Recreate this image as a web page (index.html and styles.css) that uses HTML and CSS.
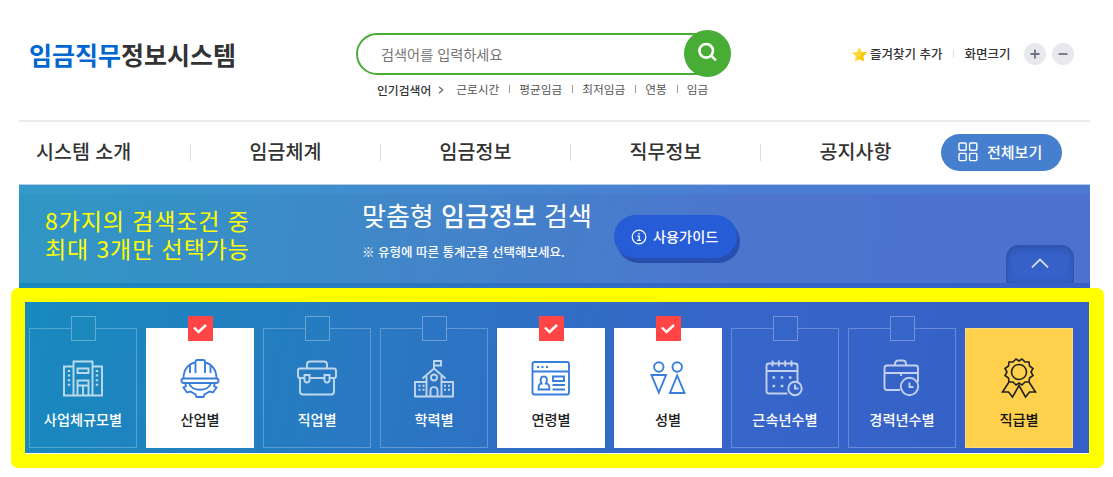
FILE: index.html
```html
<!DOCTYPE html>
<html lang="ko">

<head>
    <meta charset="UTF-8" />
    <meta name="viewport" content="width=device-width, initial-scale=1.0" />
    <title>임금직무정보시스템</title>
    <link rel="stylesheet" href="styles.css">
</head>

<body>
    <div class="wrap">
        <header class="header">
            <h1 class="logo"><span>임금직무</span>정보시스템</h1>

            <div class="search">
                <div class="search-box">
                    <input type="text" placeholder="검색어를 입력하세요">
                    <button class="search-btn" aria-label="검색">
                        <svg width="22" height="22" viewBox="0 0 22 22" fill="none" stroke="#fff" stroke-width="2.6">
                            <circle cx="9.2" cy="9.8" r="6.8" />
                            <path d="M14 14.6L19 19.4" />
                        </svg>
                    </button>
                </div>
                <div class="keywords">
                    <strong>인기검색어</strong>
                    <svg width="6" height="8" viewBox="0 0 6 8" fill="none" stroke="#777" stroke-width="1.5">
                        <path d="M1 .7L4.6 4L1 7.3" />
                    </svg>
                    <ul>
                        <li>근로시간</li>
                        <li>평균임금</li>
                        <li>최저임금</li>
                        <li>연봉</li>
                        <li>임금</li>
                    </ul>
                </div>
            </div>

            <div class="util">
                <svg width="15" height="15" viewBox="0 0 15 15">
                    <path fill="#ffd83a" d="M7.5 0L9.8 4.9L15 5.6L11.2 9.3L12.1 14.6L7.5 12.1L2.9 14.6L3.8 9.3L0 5.6L5.2 4.9Z" />
                    <path fill="#ffc400" d="M9.8 4.9L15 5.6L11.2 9.3L12.1 14.6L7.5 12.1L4.5 13.6L9 8Z" />
                </svg>
                <span class="fav">즐겨찾기 추가</span>
                <span class="size">화면크기</span>
                <button class="zoom" aria-label="확대">
                    <svg width="10" height="10" viewBox="0 0 10 10" stroke="#6c7382" stroke-width="1.8"><path d="M.5 5H9.5M5 .5V9.5" /></svg>
                </button>
                <button class="zoom" aria-label="축소">
                    <svg width="10" height="10" viewBox="0 0 10 10" stroke="#6c7382" stroke-width="1.8"><path d="M.5 5H9.5" /></svg>
                </button>
            </div>
        </header>

        <nav class="nav">
            <ul>
                <li>시스템 소개</li>
                <li>임금체계</li>
                <li>임금정보</li>
                <li>직무정보</li>
                <li>공지사항</li>
            </ul>
            <button class="all">
                <svg width="20" height="20" viewBox="0 0 20 20" fill="none" stroke="#fff" stroke-width="1.4">
                    <rect x="1" y="1" width="7.2" height="7.2" rx="1" />
                    <rect x="11.6" y="1" width="7.2" height="7.2" rx="1" />
                    <rect x="1" y="11.4" width="7.2" height="7.2" rx="1" />
                    <rect x="11.6" y="11.4" width="7.2" height="7.2" rx="1" />
                </svg>
                <span>전체보기</span>
            </button>
        </nav>

        <section class="finder">
            <div class="finder-head">
                <p class="notice">8가지의 검색조건 중<br>최대 3개만 선택가능</p>
                <div class="title">
                    <h2>맞춤형 <b>임금정보</b> 검색</h2>
                    <p>※ 유형에 따른 통계군을 선택해보세요.</p>
                </div>
                <button class="guide">
                    <svg width="16" height="16" viewBox="0 0 16 16" fill="none" stroke="#fff" stroke-width="1.2">
                        <circle cx="8" cy="8" r="6.8" />
                        <path d="M8 4V5.6M6.4 7.2H8.2V11.2M6.2 11.4H10" stroke-width="1.3" />
                    </svg>
                    <span>사용가이드</span>
                </button>
                <button class="fold" aria-label="접기">
                    <svg width="18" height="11" viewBox="0 0 18 11" fill="none" stroke="#d5def5" stroke-width="1.8">
                        <path d="M1 9.3L9 1.5L17 9.3" />
                    </svg>
                </button>
            </div>

            <ul class="cards">
                <li class="card">
                    <i class="check"></i>
                    <svg class="icon" viewBox="0 0 44 44">
                        <path d="M12.5 10.5H3V39.5H41V10.5H31.5M12.5 39.5V5.5H31.5V39.5" />
                        <path d="M16.5 12.5H27.5V17H16.5ZM16.5 39.5V24.5H27.5V39.5M16.5 29.5H27.5M22 29.5V39.5" />
                        <path d="M8 14V30M36 14V30" stroke-width="2.4" stroke-dasharray="2 2.6" />
                    </svg>
                    <span>사업체규모별</span>
                </li>
                <li class="card on">
                    <i class="check"><svg width="16" height="12" viewBox="0 0 16 12"><path d="M2 4.5L6.5 9L14 2" /></svg></i>
                    <svg class="icon" viewBox="0 0 44 44">
                        <path d="M5.5 22.5C5.5 14 10 8 17 6.5M27 6.5C34 8 38.5 14 38.5 22.5M17.5 17V5.5Q17.5 4 19.500 4H25Q27 4 27 5.500V17M12 17V9.500M32.500 17V9.500" />
                        <rect x="3.500" y="22.500" width="37" height="4.500" rx="2.200" />
                        <path d="M11 27C13 36 31 36 33 27M7 27L8 30L5.500 31.500L9 36.500L12.500 35.500L17.500 38.500L18.500 41H25.500L26.500 38.500L31.500 35.500L35 36.500L38.500 31.500L36 30L37 27" />
                    </svg>
                    <span>산업별</span>
                </li>
                <li class="card">
                    <i class="check"></i>
                    <svg class="icon" viewBox="0 0 44 44">
                        <path d="M12 12V8.500Q12 5.500 15 5.500H29Q32 5.500 32 8.500V12M9 22H5Q3 22 3 20V14.500Q3 12.500 5 12.500H39Q41 12.500 41 14.500V20Q41 22 39 22H35M14.500 22H29.500M5 22V35.500Q5 38.500 8 38.500H36Q39 38.500 39 35.500V22" />
                        <path d="M9.500 19H14.500V24Q14.500 26.500 12 26.500T9.500 24ZM29.500 19H34.500V24Q34.500 26.500 32 26.500T29.500 24Z" />
                    </svg>
                    <span>직업별</span>
                </li>
                <li class="card">
                    <i class="check"></i>
                    <svg class="icon" viewBox="0 0 44 44">
                        <path d="M22 13V5H29V9.500H22M10.500 22.500L22 12.500L33.500 22.500M14.500 20V40.500M29.500 20V40.500M14.500 26H2M29.500 26H42M3 26V40.500H41V26M18.500 40.500V34.500C18.500 30 25.500 30 25.500 34.500V40.500" />
                        <circle cx="22" cy="21.500" r="3" />
                        <path d="M6.500 29.800H12.500M6.500 33.800H12.500M32 29.800H38M32 33.800H38" stroke-width="2" stroke-dasharray="2 2" />
                    </svg>
                    <span>학력별</span>
                </li>
                <li class="card on">
                    <i class="check"><svg width="16" height="12" viewBox="0 0 16 12"><path d="M2 4.500L6.500 9L14 2" /></svg></i>
                    <svg class="icon" viewBox="0 0 44 44">
                        <rect x="3.500" y="6" width="36.500" height="32.500" rx="2" />
                        <path d="M3.500 15.500H40M24 20.500H35V25H24ZM23.500 29H36M23.500 33.500H36M9.500 33.500C9.500 29.500 11 27.500 12.500 27.500C10.500 23 12 20.500 14.800 20.500S19 23 17 27.500C19 27.500 20.500 29.500 20.500 33.500Z" />
                        <path d="M8 11H19" stroke-width="1.800" stroke-dasharray="2 2.500" />
                    </svg>
                    <span>연령별</span>
                </li>
                <li class="card on">
                    <i class="check"><svg width="16" height="12" viewBox="0 0 16 12"><path d="M2 4.500L6.500 9L14 2" /></svg></i>
                    <svg class="icon" viewBox="0 0 44 44">
                        <circle cx="12.800" cy="11" r="4.700" />
                        <circle cx="31.200" cy="11" r="4.700" />
                        <path d="M5.500 19H20L12.800 36.500ZM31.200 19.500L38.500 37H24Z" />
                    </svg>
                    <span>성별</span>
                </li>
                <li class="card">
                    <i class="check"></i>
                    <svg class="icon" viewBox="0 0 44 44">
                        <path d="M24.500 37.500H6Q3.500 37.500 3.500 35V10Q3.500 7.500 6 7.500H32Q34.500 7.500 34.500 10V26M3.500 15H34.500M9.500 4.500V10.500M15.800 4.500V10.500M22.200 4.500V10.500M28.500 4.500V10.500" />
                        <path d="M9.500 21.500H30M9.500 30H22" stroke-width="2.600" stroke-dasharray="2.600 5.600" />
                        <circle cx="32" cy="32.500" r="6.700" />
                        <path d="M32 28.500V32.500H35.500" />
                    </svg>
                    <span>근속년수별</span>
                </li>
                <li class="card">
                    <i class="check"></i>
                    <svg class="icon" viewBox="0 0 44 44">
                        <path d="M15 9.500V8Q15 4.500 18.500 4.500H22.500Q26 4.500 26 8V9.500M20 34H7Q4.500 34 4.500 31.500V12Q4.500 9.500 7 9.500H35.500Q38 9.500 38 12V26M4.500 17H38M21 17V20" />
                        <circle cx="29.500" cy="30.500" r="8.700" />
                        <path d="M29.500 26.500V31H33.500" />
                    </svg>
                    <span>경력년수별</span>
                </li>
                <li class="card rank">
                    <svg class="icon" viewBox="0 0 44 44">
                        <path d="M22 5L25 3L28 6L32 6L32.500 10L36 12.500L34 16L36 19.500L32.500 22L32 26L28 26L25 29L22 27L19 29L16 26L12 26L11.500 22L8 19.500L10 16L8 12.500L11.500 10L12 6L16 6L19 3Z" />
                        <circle cx="22" cy="16" r="7.500" />
                        <path d="M12 26L5.500 36L11.500 36L15.500 41L22 29.500L28.500 41L32.500 36L38.500 36L32 26" />
                    </svg>
                    <span>직급별</span>
                </li>
            </ul>
            <div class="frame"></div>
        </section>
    </div>
</body>

</html>
```
FILE: styles.css
```css
* {
    box-sizing: border-box;
    margin: 0;
    padding: 0;
}

body {
    min-height: 100vh;
    background-color: #fff;
    color: #333;
    font-family: "Noto Sans CJK KR", "Noto Sans", sans-serif;
}

ul {
    list-style: none;
}

button {
    border: 0;
    font-family: inherit;
    cursor: pointer;
}

svg {
    display: block;
    flex-shrink: 0;
}

.wrap {
    width: 1071px;
    margin-left: 19px;
    padding-bottom: 24px;
}

/* header */
.header {
    display: flex;
    align-items: flex-start;
    height: 122px;
    border-bottom: 2px solid #ebebeb;
}

.logo {
    width: 337px;
    padding: 36px 0 0 10px;
    font-size: 25px;
    line-height: 36px;
    font-weight: 700;
}

.logo span {
    color: #0066d0;
}

.search {
    width: 375px;
    padding-top: 30px;
}

.search-box {
    display: flex;
    align-items: center;
    height: 47px;
}

.search-box input {
    width: 364px;
    height: 42px;
    padding-left: 23px;
    border: 2px solid #47ad35;
    border-radius: 21px;
    font-family: inherit;
    font-size: 14.2px;
    outline: none;
}

.search-box input::placeholder {
    color: #757575;
}

.search-btn {
    display: flex;
    align-items: center;
    justify-content: center;
    width: 47px;
    height: 47px;
    margin-left: -36px;
    padding-bottom: 3px;
    border-radius: 50%;
    background-color: #47ad35;
}

.keywords {
    display: flex;
    align-items: center;
    padding-left: 21px;
    font-size: 11.8px;
    line-height: 24px;
}

.keywords strong {
    margin-right: 7px;
    padding-top: 1px;
    font-weight: 500;
}

.keywords ul {
    display: flex;
    margin: -2px 0 0 12px;
    color: #555;
    font-size: 11.7px;
}

.keywords li {
    display: flex;
    align-items: center;
}

.keywords li + li::before {
    content: "";
    width: 1px;
    height: 8px;
    margin: 1px 9px 0 10px;
    background-color: #999;
}

.util {
    display: flex;
    align-items: center;
    height: 22px;
    margin: 43px 0 0 121px;
    font-size: 12.5px;
    font-weight: 500;
    white-space: nowrap;
}

.util span {
    margin-top: -2px;
}

.fav {
    margin-left: 3px;
}

.size {
    display: flex;
    align-items: center;
    margin-right: 13px;
}

.size::before {
    content: "";
    width: 1px;
    height: 9px;
    margin: 0 11px 0 10px;
    background-color: #ddd;
}

.zoom {
    display: flex;
    align-items: center;
    justify-content: center;
    width: 22px;
    height: 22px;
    margin-right: 6px;
    border-radius: 50%;
    background-color: #e8e8ed;
}

/* menu */
.nav {
    display: flex;
    align-items: center;
    height: 62px;
    padding-bottom: 2px;
}

.nav ul {
    display: flex;
    width: 922px;
}

.nav li {
    display: flex;
    align-items: center;
    justify-content: center;
    flex-shrink: 0;
    width: 190px;
    height: 17px;
    padding-bottom: 3px;
    border-left: 1px solid #ddd;
    font-size: 19.5px;
    font-weight: 500;
    line-height: 13px;
    white-space: nowrap;
}

.nav li:first-child {
    justify-content: flex-start;
    width: 171px;
    padding-left: 17px;
    border-left: 0;
}

.nav .all {
    display: flex;
    align-items: center;
    gap: 9px;
    width: 121px;
    height: 37px;
    padding-left: 17px;
    border-radius: 19px;
    background-color: #467fce;
    color: #fff;
    font-size: 15px;
    font-weight: 500;
}

.all span,
.guide span {
    margin-top: -2px;
}

/* search conditions */
.finder {
    position: relative;
    height: 269px;
    background: linear-gradient(100deg, #168bbd 0%, #2a78c2 35%, #3665c8 65%, #3660c8 100%);
}

.finder-head {
    display: flex;
    align-items: flex-start;
    height: 99px;
    border-top: 1px solid #b4cbe6;
    background: linear-gradient(rgba(80, 170, 240, 0.15) 9px, transparent 9px), rgba(255, 255, 255, 0.11);
    color: #fff;
}

.notice {
    width: 343px;
    padding: 21px 0 0 26px;
    color: #ff0;
    font-size: 23px;
    line-height: 28px;
    letter-spacing: 0.9px;
}

.title {
    width: 252px;
    white-space: nowrap;
}

.title h2 {
    padding-top: 11px;
    font-size: 26px;
    line-height: 38px;
    font-weight: 400;
}

.title b {
    font-weight: 500;
}

.title p {
    margin-top: 8px;
    font-size: 12.5px;
    line-height: 20px;
    font-weight: 500;
}

.guide {
    display: flex;
    align-items: center;
    gap: 6px;
    width: 123px;
    height: 43px;
    margin-top: 30px;
    padding-left: 17px;
    border-radius: 22px;
    background-color: #265cd6;
    box-shadow: 3px 5px 0 #284fae;
    color: #fff;
    font-size: 14.2px;
    font-weight: 500;
}

.fold {
    display: flex;
    justify-content: center;
    width: 68px;
    height: 38px;
    margin: 60px 0 0 269px;
    padding-top: 13px;
    border-radius: 13px 13px 0 0;
    background-color: #3661c8;
    box-shadow: inset 0 2px 6px 1px rgba(40, 70, 140, 0.6);
}

.cards {
    display: grid;
    grid-template-columns: repeat(9, 108px);
    gap: 9px;
    padding: 45px 0 0 10px;
}

.card {
    display: flex;
    flex-direction: column;
    align-items: center;
    height: 120px;
    border: 1px solid rgba(255, 255, 255, 0.25);
    color: #fff;
    font-size: 14.2px;
    line-height: 20px;
    font-weight: 500;
}

.check {
    display: flex;
    align-items: center;
    justify-content: center;
    width: 25px;
    height: 25px;
    margin: -13px 0 15px;
    border: 1px solid rgba(255, 255, 255, 0.3);
    background-color: #257cc1;
}

.check path {
    fill: none;
    stroke: #fff;
    stroke-width: 2.4;
}

.icon {
    width: 44px;
    height: 44px;
    margin-bottom: 9px;
    fill: none;
    stroke: #fff;
    stroke-width: 1.9;
    opacity: 0.7;
}

.card:first-child .check {
    background-color: #1b88be;
}

.card:nth-child(4) .check {
    background-color: #2b75c4;
}

.card:nth-child(7) .check,
.card:nth-child(8) .check {
    background-color: #3665c8;
}

.card.on {
    background-color: #fff;
    color: #222;
}

.card.on .check {
    border-color: #ff4545;
    background-color: #ff4545;
}

.card.on .icon {
    stroke: #397ddd;
    opacity: 1;
}

.card.rank {
    padding-top: 27px;
    background-color: #ffd04b;
    color: #111;
}

.rank .icon {
    stroke: #222;
    stroke-width: 1.6;
    opacity: 1;
}

/* marker frame around the condition list */
.frame {
    position: absolute;
    top: 104px;
    left: -8px;
    width: 1093px;
    height: 180px;
    border: 14px solid #ff0;
    border-right-width: 15px;
    border-radius: 7px;
}
```
